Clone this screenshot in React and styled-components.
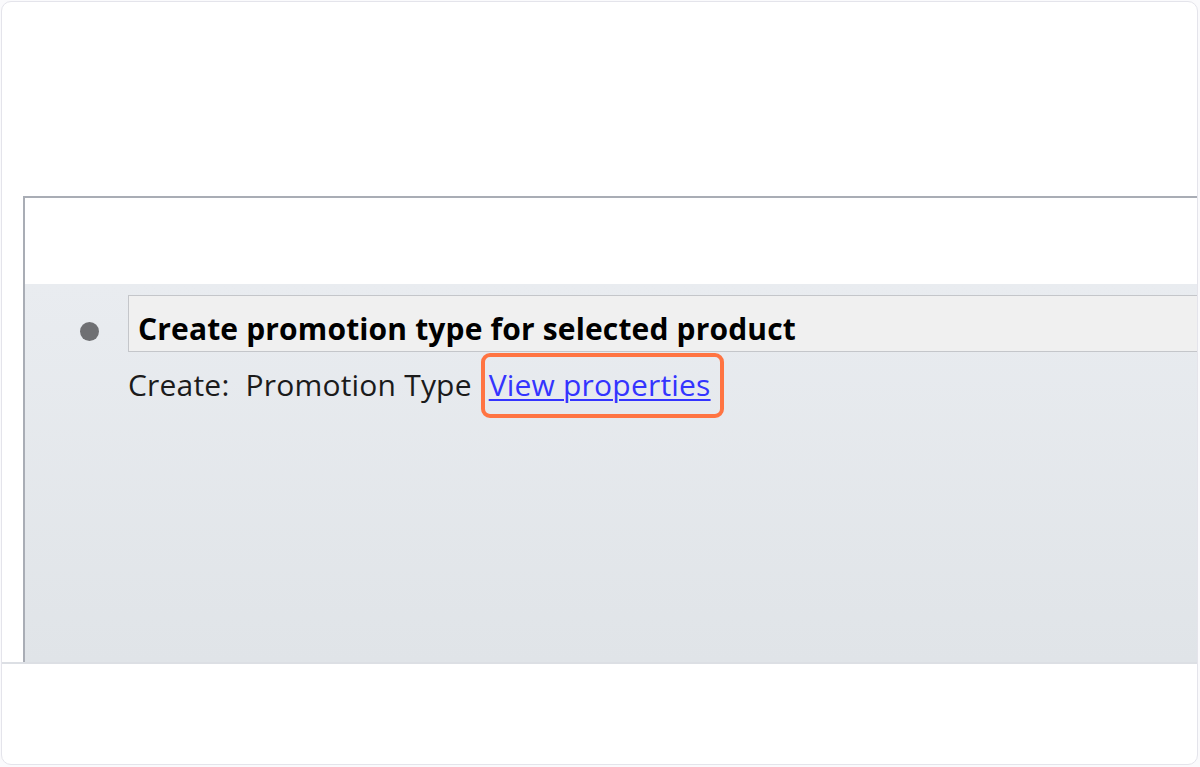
import React from "react";
import styled, { createGlobalStyle } from "styled-components";

const GlobalStyle = createGlobalStyle`
  html, body {
    margin: 0;
    padding: 0;
    background: #fafafc;
  }
  body {
    font-family: "Open Sans", "Noto Sans", sans-serif;
  }
`;

const App = () => {
  return (
    <>
      <GlobalStyle />
      <Card>
        <TopSpace />
        <Shot>
          <Window>
            <WindowHeader />
            <WindowBody>
              <TitleRow>
                <Bullet />
                <TitleBox>Create promotion type for selected product</TitleBox>
              </TitleRow>
              <SubLine>
                <span>Create:&nbsp; Promotion Type</span>
                <Highlight>
                  <Link href="#">View properties</Link>
                </Highlight>
              </SubLine>
            </WindowBody>
          </Window>
        </Shot>
      </Card>
    </>
  );
};

const Card = styled.div`
  margin: 1px;
  width: 1197px;
  height: 764px;
  box-sizing: border-box;
  border: 1px solid #e4e4eb;
  border-radius: 10px;
  background: #ffffff;
  overflow: hidden;
  display: flex;
  flex-direction: column;
`;

const TopSpace = styled.div`
  height: 194px;
  flex-shrink: 0;
`;

const Shot = styled.div`
  height: 466px;
  flex-shrink: 0;
  display: flex;
  padding-left: 21px;
  border-bottom: 2px solid #dcdfe4;
  overflow: hidden;
`;

const Window = styled.div`
  flex: 1;
  margin-right: -40px;
  display: flex;
  flex-direction: column;
  border-left: 2px solid #a9adb5;
  border-top: 2px solid #a9adb5;
`;

const WindowHeader = styled.div`
  height: 86px;
  background: #ffffff;
`;

const WindowBody = styled.div`
  flex: 1;
  background: linear-gradient(#e9ecf0, #e0e4e8);
  padding: 11px 0 0 55px;
  color: #1b1b1b;
`;

const TitleRow = styled.div`
  display: flex;
  align-items: flex-start;
  gap: 29px;
`;

const Bullet = styled.span`
  width: 19px;
  height: 19px;
  margin-top: 27px;
  border-radius: 50%;
  background: #6f7073;
  flex-shrink: 0;
`;

const TitleBox = styled.div`
  flex: 1;
  height: 46px;
  padding: 9px 0 0 9px;
  display: flex;
  align-items: center;
  background: #f0f0f0;
  border: 1px solid #c4c6ca;
  border-right: none;
  font-size: 30px;
  font-weight: 700;
  letter-spacing: 0.15px;
  color: #000000;
  white-space: nowrap;
`;

const SubLine = styled.div`
  margin-top: 1px;
  margin-left: 48px;
  font-size: 30px;
  letter-spacing: 0.2px;
  display: flex;
  align-items: baseline;
  white-space: nowrap;
`;

const Highlight = styled.span`
  display: inline-block;
  margin-left: 9px;
  padding: 10px 9px 12px 4px;
  border: 4px solid #ff7442;
  border-radius: 9px;
  line-height: 35px;
`;

const Link = styled.a`
  color: #3434ff;
  text-decoration: underline;
  text-decoration-thickness: 2px;
  text-underline-offset: 3px;
`;

export default App;
